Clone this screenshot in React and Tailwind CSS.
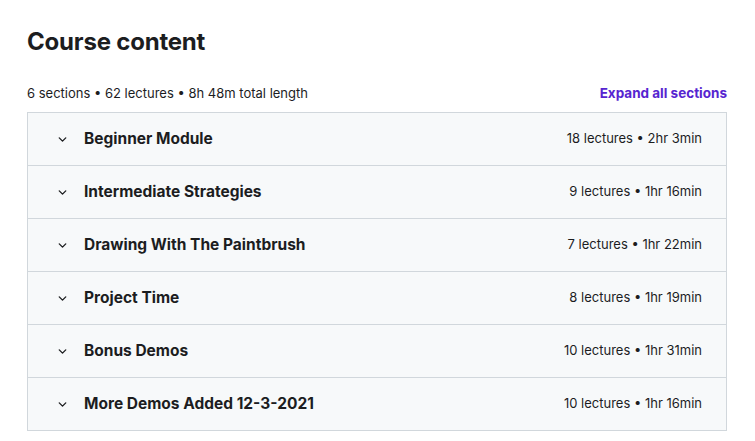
import { ChevronDown } from 'lucide-react';

const sections = [
  { title: 'Beginner Module', meta: '18 lectures • 2hr 3min' },
  { title: 'Intermediate Strategies', meta: '9 lectures • 1hr 16min' },
  { title: 'Drawing With The Paintbrush', meta: '7 lectures • 1hr 22min' },
  { title: 'Project Time', meta: '8 lectures • 1hr 19min' },
  { title: 'Bonus Demos', meta: '10 lectures • 1hr 31min' },
  { title: 'More Demos Added 12-3-2021', meta: '10 lectures • 1hr 16min' },
];

export default function App() {
  return (
    <div
      className="min-h-screen bg-white text-[#1c1d1f] px-[27px] pt-[27px]"
      style={{ fontFamily: 'Inter, "Noto Sans", sans-serif' }}
    >
      <div className="w-[700px]">
        {/* Header */}
        <h2 className="text-[24px] font-bold leading-[30px] tracking-[-0.2px]">Course content</h2>

        <div className="flex items-end justify-between mt-[27px] mb-[10px]">
          <p className="text-[13px] leading-[18px]">6 sections • 62 lectures • 8h 48m total length</p>
          <button className="text-[13.5px] font-bold leading-[18px] text-[#5624d0]">
            Expand all sections
          </button>
        </div>

        {/* Sections */}
        <div className="border border-[#d1d7dc]">
          {sections.map((s, i) => (
            <div
              key={s.title}
              className={`flex items-center bg-[#f7f9fa] pl-[28px] pr-[24px] ${
                i > 0 ? 'h-[53px] border-t border-[#d1d7dc]' : 'h-[52px]'
              }`}
            >
              <ChevronDown className="w-[13px] h-[13px] text-[#1c1d1f]" strokeWidth={2.5} />
              <span className="ml-[15px] flex-1 text-[15.5px] font-bold">{s.title}</span>
              <span className="text-[13px]">{s.meta}</span>
            </div>
          ))}
        </div>
      </div>
    </div>
  );
}
